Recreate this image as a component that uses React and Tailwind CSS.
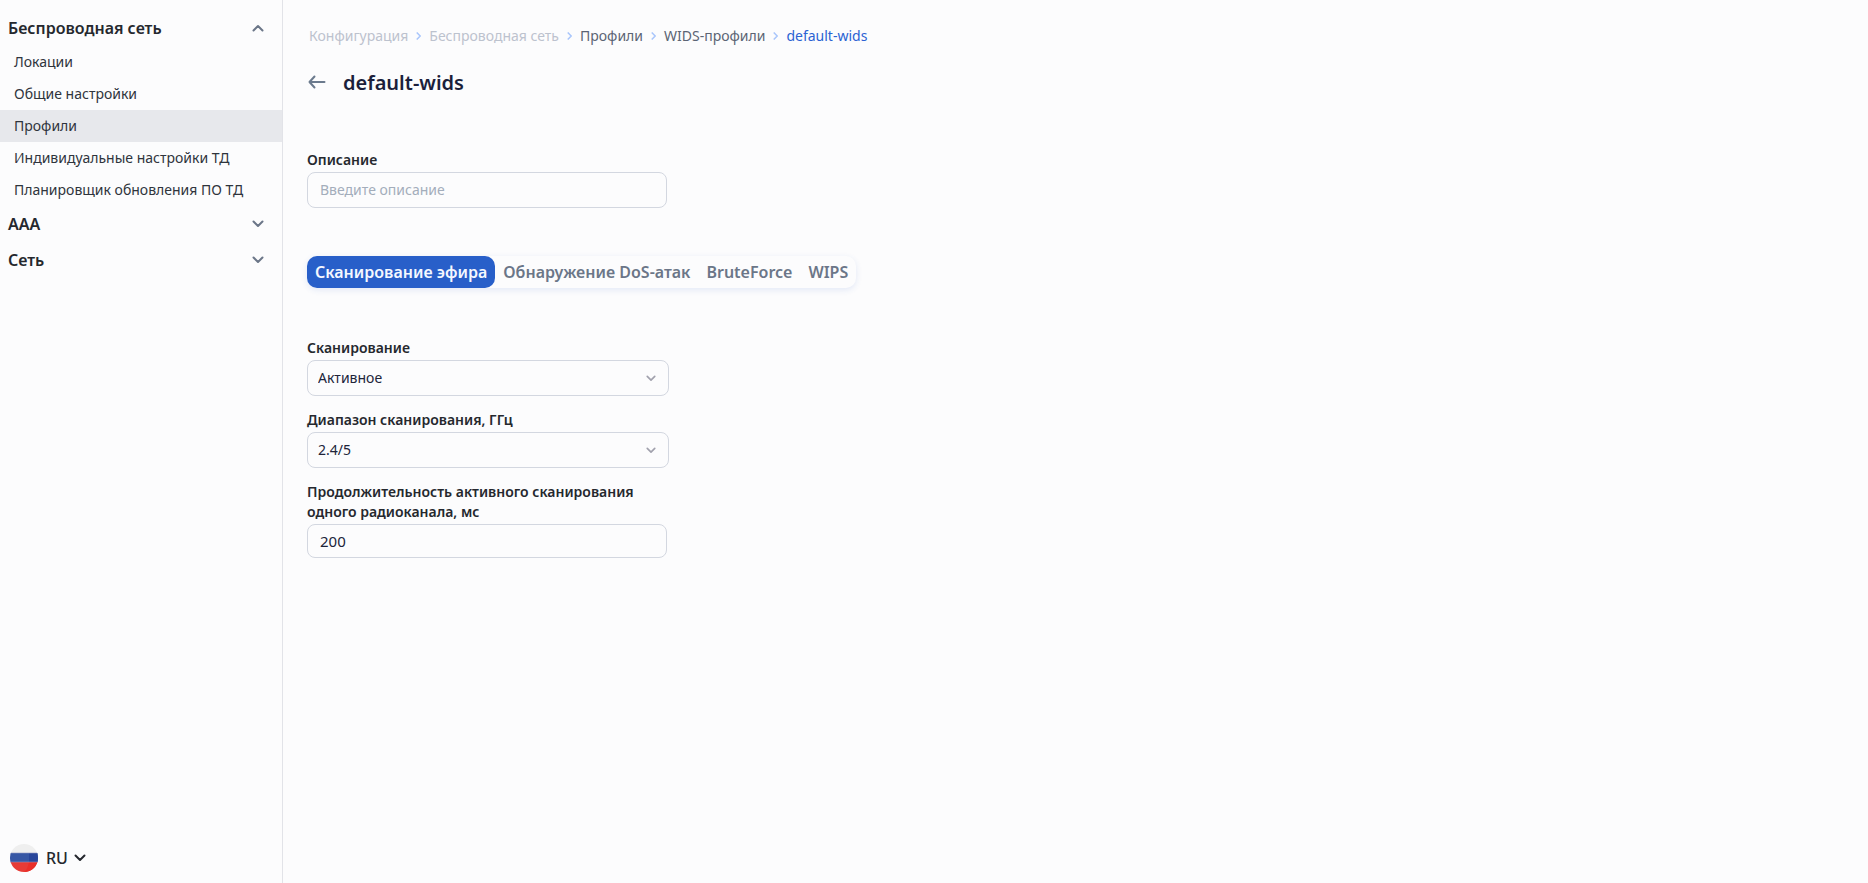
import React, { useState } from 'react';

const wirelessLinks = [
  'Локации',
  'Общие настройки',
  'Профили',
  'Индивидуальные настройки ТД',
  'Планировщик обновления ПО ТД',
];

const crumbs = [
  { title: 'Конфигурация', className: 'text-[#bcc2ce]' },
  { title: 'Беспроводная сеть', className: 'text-[#bcc2ce]' },
  { title: 'Профили', className: 'text-[#5b6474]' },
  { title: 'WIDS-профили', className: 'text-[#5b6474]' },
  { title: 'default-wids', className: 'text-[#2b62d3]' },
];

const tabs = ['Сканирование эфира', 'Обнаружение DoS-атак', 'BruteForce', 'WIPS'];

const Chevron = ({ className }) => (
  <svg viewBox="0 0 12 8" fill="none" stroke="currentColor" strokeWidth="2" strokeLinecap="round" strokeLinejoin="round" className={className} aria-hidden="true">
    <path d="M1.5 1.5L6 6l4.500-4.500" />
  </svg>
);

const FlagRu = () => (
  <svg viewBox="0 0 28 28" className="w-7 h-7 mr-[2px]" aria-hidden="true">
    <defs>
      <clipPath id="flag-circle">
        <circle cx="14" cy="14" r="14" />
      </clipPath>
    </defs>
    <g clipPath="url(#flag-circle)">
      <rect width="28" height="9" fill="#efefef" />
      <rect y="9" width="28" height="9" fill="#3757a6" />
      <rect y="18" width="28" height="10" fill="#e73b36" />
      <path d="M19 9h9v9h-9z" fill="#2a479b" />
      <path d="M19 18h9v10H14c3-2 4-6 5-10z" fill="#e92f29" />
      <path d="M0 9h28M0 18h28" stroke="#8d93c0" strokeWidth="1" opacity="0.6" />
    </g>
  </svg>
);

const SectionButton = ({ title, open, onClick }) => (
  <button
    type="button"
    aria-expanded={open}
    onClick={onClick}
    className="flex items-center justify-between w-full h-9 pl-2 pr-[18px] text-base font-semibold text-[#25282e]"
  >
    {title}
    <Chevron className={open ? 'w-3 h-2 text-[#6b7688] rotate-180' : 'w-3 h-2 text-[#6b7688]'} />
  </button>
);

const Sidebar = () => {
  const [open, setOpen] = useState(true);

  return (
    <aside className="flex flex-col shrink-0 w-[283px] pt-[10px] border-r border-[#e2e3e8]">
      <nav>
        <SectionButton title="Беспроводная сеть" open={open} onClick={() => setOpen(!open)} />
        {open && (
          <ul>
            {wirelessLinks.map((title) => (
              <li key={title}>
                <a
                  href="#"
                  className={`flex items-center h-8 pl-[14px] text-sm text-[#2f343c] ${title === 'Профили' ? 'bg-[#e7e8ec]' : ''}`}
                >
                  {title}
                </a>
              </li>
            ))}
          </ul>
        )}
        <SectionButton title="AAA" open={false} />
        <SectionButton title="Сеть" open={false} />
      </nav>

      {/* Language */}
      <button type="button" className="flex items-center gap-[6px] mt-auto mb-[7px] ml-[10px] h-9 self-start font-medium text-[#25282e]">
        <FlagRu />
        RU
        <Chevron className="w-3 h-2" />
      </button>
    </aside>
  );
};

const SelectField = ({ id, label, options }) => (
  <div className="flex flex-col gap-[2px] w-[362px]">
    <label htmlFor={id} className="text-sm font-semibold text-[#25282e]">{label}</label>
    <div className="relative">
      <select
        id={id}
        className="block w-full h-9 pl-[10px] pr-8 text-sm text-[#20243a] bg-transparent border border-[#d3d7e0] rounded-lg appearance-none"
      >
        {options.map((option) => (
          <option key={option}>{option}</option>
        ))}
      </select>
      <Chevron className="absolute right-[13px] top-[15px] w-[10px] h-[7px] text-[#a1a1ad] pointer-events-none" />
    </div>
  </div>
);

const App = () => {
  const [active, setActive] = useState(tabs[0]);

  return (
    <div className="flex min-h-screen bg-[#fcfcfd] font-['Noto_Sans','Open_Sans',sans-serif]">
      <Sidebar />

      <main className="flex-1 min-w-0 px-6 pt-[26px]">
        {/* Breadcrumbs */}
        <nav className="flex items-center gap-2 pl-[2px] text-sm">
          {crumbs.map((crumb, index) => (
            <React.Fragment key={crumb.title}>
              {index > 0 && (
                <svg viewBox="0 0 5 8" fill="none" stroke="#a9c6fb" strokeWidth="1.5" className="w-[5px] h-2" aria-hidden="true">
                  <path d="M0.700 0.500L4.200 4L0.700 7.500" />
                </svg>
              )}
              <a href="#" className={crumb.className}>{crumb.title}</a>
            </React.Fragment>
          ))}
        </nav>

        <header className="flex items-center gap-4 h-9 mt-[18px]">
          <button type="button" aria-label="Назад" className="w-5 h-5 text-[#6b7a8d]">
            <svg viewBox="0 0 20 20" fill="none" stroke="currentColor" strokeWidth="2" strokeLinecap="round" strokeLinejoin="round">
              <path d="M17.500 10H2.500M7.500 4.500L2.500 10l5 5.500" />
            </svg>
          </button>
          <h1 className="pt-[2px] text-xl font-semibold text-[#1b1f3b]">default-wids</h1>
        </header>

        <div className="flex flex-col gap-[2px] w-[360px] mt-[50px]">
          <label htmlFor="description" className="text-sm font-semibold text-[#25282e]">Описание</label>
          <input
            id="description"
            type="text"
            placeholder="Введите описание"
            className="h-9 px-3 pb-[2px] text-sm text-[#20243a] placeholder-[#a3adbb] bg-transparent border border-[#d3d7e0] rounded-lg"
          />
        </div>

        {/* Tabs */}
        <div role="tablist" className="flex w-fit mt-12 rounded-[10px] shadow-[0_2px_6px_rgba(40,90,200,0.12)]">
          {tabs.map((tab) => (
            <button
              key={tab}
              type="button"
              role="tab"
              aria-selected={tab === active}
              onClick={() => setActive(tab)}
              className={`h-8 px-2 text-base font-semibold rounded-[10px] ${tab === active ? 'bg-[#285fc9] text-[#f5f8ff]' : 'text-[#6b7688]'}`}
            >
              {tab}
            </button>
          ))}
        </div>

        <form className="flex flex-col gap-[14px] mt-[50px]">
          <SelectField id="scan-mode" label="Сканирование" options={['Активное', 'Пассивное']} />
          <SelectField id="scan-range" label="Диапазон сканирования, ГГц" options={['2.4/5', '2.4', '5']} />
          <div className="flex flex-col gap-[2px] w-[360px]">
            <label htmlFor="scan-time" className="text-sm font-semibold text-[#25282e]">
              Продолжительность активного сканирования одного радиоканала, мс
            </label>
            <input
              id="scan-time"
              type="text"
              defaultValue="200"
              className="h-[34px] px-3 text-[15px] text-[#20243a] bg-transparent border border-[#d3d7e0] rounded-lg"
            />
          </div>
        </form>
      </main>
    </div>
  );
};

export default App;
